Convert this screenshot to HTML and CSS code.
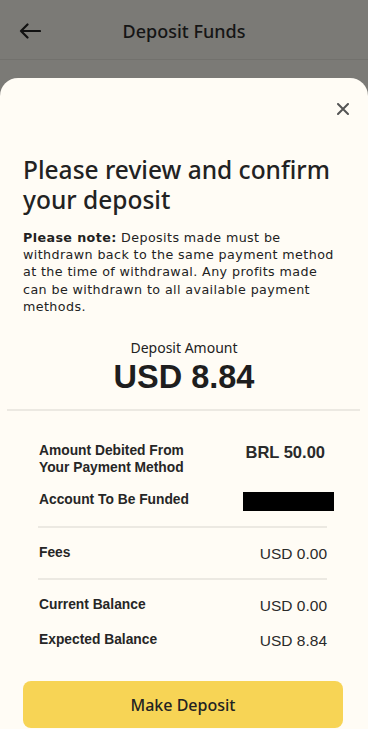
FILE: index.html
```html
<!DOCTYPE html>
<html>
<head>
<meta charset="utf-8">
<link rel="stylesheet" href="styles.css">
</head>
<body>
<div class="header">
  <svg class="back" width="22" height="16" viewBox="0 0 22 16"><path d="M21 8H2M8.5 1.5L2 8l6.5 6.5" fill="none" stroke="#111" stroke-width="2.2" stroke-linecap="round" stroke-linejoin="round"/></svg>
  <div class="htitle">Deposit Funds</div>
</div>
<div class="sheet">
  <div class="closerow">
    <svg width="12" height="12" viewBox="0 0 12 12"><path d="M1 1L11 11M11 1L1 11" stroke="#555" stroke-width="2" stroke-linecap="round"/></svg>
  </div>
  <h1 class="title">Please review and confirm your deposit</h1>
  <p class="note"><b>Please note:</b> Deposits made must be<br>withdrawn back to the same payment method<br>at the time of withdrawal. Any profits made<br>can be withdrawn to all available payment<br>methods.</p>
  <div class="amount">
    <div class="alabel">Deposit Amount</div>
    <div class="avalue">USD 8.84</div>
  </div>
  <div class="divider"></div>
  <div class="details">
    <div class="row r1">
      <div class="label">Amount Debited From<br>Your Payment Method</div>
      <div class="value bold">BRL 50.00</div>
    </div>
    <div class="row r2">
      <div class="label">Account To Be Funded</div>
      <div class="redact"></div>
    </div>
    <div class="sep"></div>
    <div class="row r3">
      <div class="label">Fees</div>
      <div class="value">USD 0.00</div>
    </div>
    <div class="sep"></div>
    <div class="row r4">
      <div class="label">Current Balance</div>
      <div class="value">USD 0.00</div>
    </div>
    <div class="row r5">
      <div class="label">Expected Balance</div>
      <div class="value">USD 8.84</div>
    </div>
  </div>
  <button class="btn">Make Deposit</button>
</div>
</body>
</html>
```
FILE: styles.css
```css
* { box-sizing: border-box; }
html, body { margin: 0; padding: 0; }
body {
  background: #7b7a76;
  width: 368px;
  height: 729px;
  overflow: hidden;
  font-family: "Noto Sans", sans-serif;
  color: #1f1f1f;
}
.header {
  height: 60px;
  border-bottom: 1px solid #72716d;
  display: flex;
  align-items: center;
  position: relative;
  padding-left: 19px;
}
.back { display: block; margin-top: 3px; }
.htitle {
  position: absolute;
  left: 0; right: 0;
  text-align: center;
  font-size: 18px;
  font-weight: 500;
  color: #151515;
  top: 19px;
  pointer-events: none;
}
.sheet {
  margin-top: 18px;
  background: #fffcf5;
  border-radius: 18px 18px 0 0;
  height: 651px;
  padding-top: 25px;
}
.closerow {
  display: flex;
  justify-content: flex-end;
  padding-right: 19px;
  height: 12px;
}
.closerow svg { display: block; }
.title {
  margin: 40px 23px 0 23px;
  font-size: 24.5px;
  font-weight: 500;
  line-height: 30px;
  color: #222;
}
.note {
  margin: 14px 10px 0 23px;
  font-family: "DejaVu Sans", sans-serif;
  font-size: 12.7px;
  letter-spacing: 0.4px;
  line-height: 17.2px;
  color: #222;
  white-space: nowrap;
}
.note b { font-weight: 700; }
.amount {
  text-align: center;
  margin-top: 24px;
}
.alabel {
  font-size: 14px;
  line-height: 18px;
  color: #222;
}
.avalue {
  font-family: "Liberation Sans", Arial, sans-serif;
  font-size: 32.5px;
  font-weight: 700;
  line-height: 38px;
  color: #1e1e1e;
  padding-top: 1px;
}
.divider {
  margin: 13px 8px 0 7px;
  height: 2px;
  background: #ece9e2;
}
.details {
  margin: 0 41px 0 38px;
  padding-top: 31px;
}
.row {
  display: flex;
  justify-content: space-between;
  align-items: flex-start;
}
.label {
  font-family: "Liberation Sans", Arial, sans-serif;
  font-weight: 700;
  font-size: 13.8px;
  line-height: 17px;
  color: #262626;
  padding-left: 1px;
}
.value {
  font-family: "Liberation Sans", Arial, sans-serif;
  font-size: 15.5px;
  line-height: 18px;
  color: #2a2a2a;
  margin-top: 1px;
}
.value.bold { font-weight: 700; margin-right: 2px; font-size: 16.5px; }
.r2 { margin-top: 15px; }
.redact {
  width: 91px;
  height: 19px;
  background: #000;
  margin-right: -7px;
  margin-top: 1px;
}
.sep {
  height: 2px;
  background: #ece9e2;
}
.r2 + .sep { margin-top: 15px; }
.r3 { margin-top: 16px; }
.r3 + .sep { margin-top: 15px; }
.r4 { margin-top: 16px; }
.r5 { margin-top: 16px; }
.btn {
  display: block;
  margin: 31px 25px 0 23px;
  width: 320px;
  height: 47px;
  border: none;
  border-radius: 8px;
  background: #f7d455;
  font-family: "Noto Sans", sans-serif;
  font-size: 16px;
  font-weight: 500;
  color: #222;
}
```
